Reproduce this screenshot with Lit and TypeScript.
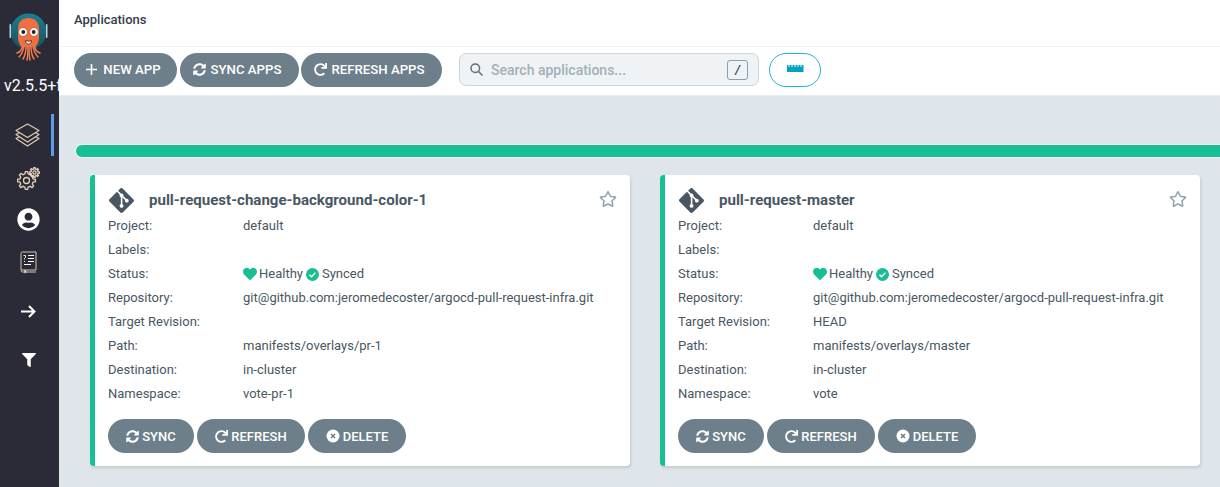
import { LitElement, html, css, svg } from "lit";
import { customElement } from "lit/decorators.js";

const SYNC = "M370.72 133.28C339.458 104.008 298.888 87.962 255.848 88c-77.458.068-144.328 53.178-162.791 126.85-1.344 5.363-6.122 9.15-11.651 9.15H24.103c-7.498 0-13.194-6.807-11.807-14.176C33.933 94.924 134.813 8 256 8c66.448 0 126.791 26.136 171.315 68.685L463.03 40.97C478.149 25.851 504 36.559 504 57.941V192c0 13.255-10.745 24-24 24H345.941c-21.382 0-32.09-25.851-16.971-40.971l41.75-41.749zM32 296h134.059c21.382 0 32.09 25.851 16.971 40.971l-41.75 41.75c31.262 29.273 71.835 45.319 114.876 45.28 77.418-.07 144.315-53.144 162.787-126.849 1.344-5.363 6.122-9.15 11.651-9.15h57.304c7.498 0 13.194 6.807 11.807 14.176C478.067 417.076 377.187 504 256 504c-66.448 0-126.791-26.136-171.315-68.685L48.97 471.03C33.851 486.149 8 475.441 8 454.059V320c0-13.255 10.745-24 24-24z";
const REDO = "M500.33 0h-47.41a12 12 0 0 0-12 12.57l4 82.76A247.42 247.42 0 0 0 256 8C119.34 8 7.9 119.53 8 256.19 8.1 393.07 119.1 504 256 504a247.1 247.1 0 0 0 166.18-63.91 12 12 0 0 0 .48-17.43l-34-34a12 12 0 0 0-16.38-.55A176 176 0 1 1 402.1 157.8l-101.53-4.87a12 12 0 0 0-12.57 12v47.41a12 12 0 0 0 12 12h200.33a12 12 0 0 0 12-12V12a12 12 0 0 0-12-12z";
const HEART = "M462.3 62.6C407.5 15.9 326 24.3 275.7 76.2L256 96.5l-19.7-20.3C186.1 24.3 104.5 15.9 49.7 62.6c-62.8 53.6-66.1 149.8-9.9 207.9l193.5 199.8c12.5 12.9 32.8 12.9 45.3 0l193.5-199.8c56.3-58.1 53-154.3-9.8-207.9z";
const USER = "M248 8C111 8 0 119 0 256s111 248 248 248 248-111 248-248S385 8 248 8zm0 96c48.6 0 88 39.4 88 88s-39.4 88-88 88-88-39.4-88-88 39.4-88 88-88zm0 344c-58.7 0-111.3-26.6-146.5-68.2 18.8-35.4 55.6-59.8 98.5-59.8 2.4 0 4.8.4 7.1 1.1 13 4.2 26.6 6.9 40.9 6.9 14.3 0 28-2.7 40.9-6.9 2.3-.7 4.7-1.1 7.1-1.1 42.9 0 79.7 24.4 98.5 59.8C359.3 421.4 306.7 448 248 448z";
const FILTER = "M487.976 0H24.028C2.71 0-8.047 25.866 7.058 40.971L192 225.941V432c0 7.831 3.821 15.17 10.237 19.662l80 55.98C298.02 518.69 320 507.493 320 487.98V225.941l184.947-184.97C520.021 25.896 509.338 0 487.976 0z";
const GIT = "M23.546 10.93L13.067.452c-.604-.603-1.582-.603-2.188 0L8.708 2.627l2.76 2.76c.645-.215 1.379-.07 1.889.441.516.515.658 1.258.438 1.9l2.658 2.66c.645-.223 1.387-.078 1.9.435.721.72.721 1.884 0 2.604-.719.719-1.881.719-2.6 0-.539-.541-.674-1.337-.404-1.996L12.86 8.955v6.525c.176.086.342.203.488.348.713.721.713 1.883 0 2.6-.719.721-1.889.721-2.609 0-.719-.719-.719-1.879 0-2.598.182-.18.387-.316.605-.406V8.835c-.217-.091-.424-.222-.6-.401-.545-.545-.676-1.342-.396-2.009L7.636 3.7.45 10.881c-.6.605-.6 1.584 0 2.189l10.48 10.477c.604.604 1.582.604 2.186 0l10.43-10.43c.605-.603.605-1.582 0-2.187";
const STAR = "M528.1 171.5L382 150.2 316.7 17.8c-11.7-23.6-45.6-23.9-57.4 0L194 150.2 47.9 171.5c-26.2 3.8-36.7 36.1-17.7 54.6l105.7 103-25 145.5c-4.5 26.3 23.2 46 46.4 33.7L288 439.6l130.7 68.7c23.2 12.2 50.9-7.4 46.4-33.7l-25-145.5 105.7-103c19-18.5 8.5-50.8-17.7-54.6zM388.6 312.3l23.7 138.4L288 385.4l-124.3 65.3 23.7-138.4-100.6-98 139-20.2 62.2-126 62.2 126 139 20.2-100.6 98z";

const icon = (d: string, vb: string, size: number, cls = "") =>
  html`<svg class=${cls} width=${size} height=${size} viewBox=${vb} fill="currentColor"><path d=${d}></path></svg>`;

const plusIcon = html`<svg width="13" height="13" viewBox="0 0 13 13" fill="none" stroke="currentColor" stroke-width="1.6"><path d="M6.5 1v11M1 6.5h11"></path></svg>`;
const xIcon = html`<svg width="14" height="14" viewBox="0 0 14 14"><circle cx="7" cy="7" r="6.5" fill="currentColor"></circle><path d="M5 5l4 4M9 5l-4 4" stroke="#6d7f8b" stroke-width="1.5"></path></svg>`;
const checkIcon = html`<svg width="13" height="13" viewBox="0 0 14 14"><circle cx="7" cy="7" r="7" fill="#18be94"></circle><path d="M3.8 7.2l2.2 2.2 4.2-4.4" fill="none" stroke="#fff" stroke-width="1.5"></path></svg>`;

const logo = html`<svg width="46" height="50" viewBox="0 0 46 50">
  <defs><linearGradient id="hel" x1="0" y1="0" x2="0" y2="1"><stop offset="0" stop-color="#1b7f8e"></stop><stop offset="1" stop-color="#1c4f5c"></stop></linearGradient></defs>
  <circle cx="22.500" cy="19.500" r="18" fill="url(#hel)"></circle>
  <path d="M5 12H4.500A1 1 0 0 0 3.500 13v12a1 1 0 0 0 1 1H5zM40 12h.500a1 1 0 0 1 1 1v12a1 1 0 0 1-1 1H40z" fill="#b4d6e6"></path>
  <g fill="none" stroke="#ee7a4d" stroke-width="1.500" stroke-linecap="round">
    <path d="M17 33c-1 5-3 7-6 8"></path>
    <path d="M18 34c-1 6-3 9-5 11"></path>
    <path d="M20 34c0 6-1 10-3 13"></path>
    <path d="M22 34c0 6 0 10-1 14"></path>
    <path d="M23 34c0 6 0 10 1 14"></path>
    <path d="M25 34c0 6 1 10 3 13"></path>
    <path d="M27 34c1 6 3 9 5 11"></path>
    <path d="M28 33c1 5 3 7 6 8"></path>
  </g>
  <path d="M12 16.500C12 10 16.500 6 22.500 6S33 10 33 16.500V26c0 4-2 7-3.500 9h-14C14 33 12 30 12 26z" fill="#ee6f43"></path>
  <circle cx="17" cy="20" r="4.300" fill="#fff" stroke="#a8452a" stroke-width=".5"></circle>
  <circle cx="28" cy="20" r="4.300" fill="#fff" stroke="#a8452a" stroke-width=".5"></circle>
  <circle cx="17.300" cy="20" r="1.900" fill="#2b1d1a"></circle>
  <circle cx="27.700" cy="20" r="1.900" fill="#2b1d1a"></circle>
  <path d="M19.500 28.500c2 1 4 1 6 0 0 2.500-1.500 3.500-3 3.500s-3-1-3-3.500z" fill="#fff" stroke="#3a1e14" stroke-width=".8"></path>
</svg>`;

const layers = html`<svg width="25" height="24" viewBox="0 0 25 24" fill="#2b2b38" stroke="#dfcdb6" stroke-width="1.200" stroke-linejoin="round">
  <path d="M1 15.500l11.500-6 11.500 6-11.500 7.500z"></path>
  <path d="M1 11.500l11.500-6 11.500 6-11.500 7.500z"></path>
  <path d="M1 7.500L12.500 1 24 7.500 12.500 14.500z"></path>
</svg>`;

const gearPath = (cx: number, cy: number, r: number, R: number, n: number) => {
  let d = "";
  const step = (Math.PI * 2) / n;
  for (let i = 0; i < n; i++) {
    const a = i * step;
    const pts: [number, number][] = [
      [a - step * 0.3, r],
      [a - step * 0.16, R],
      [a + step * 0.16, R],
      [a + step * 0.3, r],
    ];
    for (const [t, q] of pts) {
      d += `${d ? "L" : "M"}${(cx + Math.cos(t) * q).toFixed(2)} ${(cy + Math.sin(t) * q).toFixed(2)}`;
    }
  }
  return d + "Z";
};
const gear = (cx: number, cy: number, r: number, R: number, n: number, hole: number) =>
  svg`<path d=${gearPath(cx, cy, r, R, n)}></path><circle cx=${cx} cy=${cy} r=${hole}></circle>`;
const gears = html`<svg width="23" height="23" viewBox="0 0 23 23" fill="#2b2b38" stroke="#e6d3bb" stroke-width="1.300">
  ${gear(9.500, 13.500, 6.800, 9, 8, 3)}
  ${gear(17.500, 5.500, 3.600, 5, 8, 1.600)}
</svg>`;

const book = html`<svg width="17" height="23" viewBox="0 0 17 23" fill="none" stroke-width="1">
  <path d="M1 19V2.500A1.500 1.500 0 0 1 2.500 1H16v18z" stroke="#d5c6b3"></path>
  <path d="M1 19.500A1.500 1.500 0 0 0 2.500 21H16" stroke="#d5c6b3"></path>
  <path d="M3.500 4.500h2v2l-1 1v1M4.500 10v1" stroke="#fff" stroke-width=".9"></path>
  <path d="M8 4.500h6M8 7.500h6M8 10.500h6M4 13.500h7" stroke="#fff" stroke-width="1.100"></path>
  <path d="M4 19v3.500l1.200-1 1.200 1V19z" fill="#d5c6b3" stroke="none"></path>
</svg>`;

const arrow = html`<svg width="15" height="13" viewBox="0 0 15 13" fill="none" stroke="#fff" stroke-width="2"><path d="M0 6.500h13.500M8 1l5.500 5.500L8 12"></path></svg>`;

const search = html`<svg width="13" height="13" viewBox="0 0 13 13" fill="none" stroke="#5f6f7b" stroke-width="1.500"><circle cx="5.300" cy="5.300" r="4.300"></circle><path d="M8.500 8.500L12.500 12.500"></path></svg>`;

const ruler = html`<svg width="17" height="7" viewBox="0 0 17 7"><path d="M0 0h1.500v2h1V0h2v2h1V0h2v2h1V0h2v2h1V0h2v2h1V0h2v7H0z" fill="#00a2c2"></path></svg>`;

interface App { name: string; rev: string; path: string; ns: string; }
const APPS: App[] = [
  { name: "pull-request-change-background-color-1", rev: "", path: "manifests/overlays/pr-1", ns: "vote-pr-1" },
  { name: "pull-request-master", rev: "HEAD", path: "manifests/overlays/master", ns: "vote" },
];

@customElement("app-root")
export class AppRoot extends LitElement {
  static styles = css`
    :host { display: flex; width: 1220px; height: 487px; overflow: hidden; font-family: Roboto, "Liberation Sans", sans-serif; background: #dee6eb; color: #495763; }
    .side { width: 59px; flex: none; background: #2b2b38; color: #fff; overflow: hidden; display: flex; flex-direction: column; }
    .logo { height: 52px; padding: 12px 0 0 6px; flex: none; }
    .logo svg { display: block; }
    .ver { font-size: 16px; line-height: 20px; white-space: nowrap; padding-left: 4px; margin-top: 12px; color: #fff; }
    .nav { margin-top: 18px; display: flex; flex-direction: column; }
    .nav div { display: flex; align-items: center; justify-content: center; width: 57px; box-sizing: border-box; color: #fff; }
    .nav .act { width: 54px; border-right: 3px solid #5b9cee; height: 42px; margin-bottom: 1px; padding-left: 3px; }
    .h42 { height: 42px; }
    .h40 { height: 40px; }
    .h46 { height: 46px; }
    .h52 { height: 52px; }
    .main { flex: 1; min-width: 0; display: flex; flex-direction: column; }
    .top { height: 47px; flex: none; box-sizing: border-box; background: #fff; border-bottom: 1px solid #eff3f5; display: flex; align-items: center; padding: 0 15px 8px; font-size: 13px; font-weight: 500; color: #363c4a; }
    .tools { height: 49px; flex: none; background: #fff; border-bottom: 1px solid #e9eef1; box-sizing: border-box; display: flex; align-items: center; padding: 0 0 3px 15px; }
    .btn { display: inline-flex; align-items: center; justify-content: center; gap: 4px; height: 34px; border-radius: 17px; background: #6d7f8b; color: #fff; font-size: 13px; font-weight: 500; box-sizing: border-box; white-space: nowrap; }
    .btn svg { flex: none; }
    .tools .btn { font-size: 13.2px; padding-right: 5px; gap: 5px; }
    .tools .btn + .btn { margin-left: 2px; }
    .new { width: 103px; margin-right: 1px; }
    .sync { width: 119px; }
    .refresh { width: 141px; }
    .search { width: 300px; height: 33px; margin-left: 17px; box-sizing: border-box; background: #eff3f5; border: 1px solid #ccd6dd; border-radius: 7px; display: flex; align-items: center; padding: 0 10px; gap: 8px; color: #a4b0b9; font-size: 14px; font-weight: 500; }
    .search span { flex: 1; }
    .search kbd { width: 21px; height: 20px; box-sizing: border-box; border: 1px solid #8ba0ae; border-radius: 3px; display: flex; align-items: center; justify-content: center; font: italic 700 13px Roboto, sans-serif; color: #495763; }
    .rbtn { width: 52px; height: 34px; margin-left: 10px; box-sizing: border-box; border: 1px solid #1fb6cf; border-radius: 17px; display: flex; align-items: center; justify-content: center; padding-bottom: 2px; background: #fff; }
    .content { flex: 1; padding: 48px 0 0 16px; min-width: 0; }
    .bar { height: 14px; width: 1300px; box-sizing: border-box; background: #18be94; border: 1px solid #fff; border-radius: 7px; }
    .grid { display: grid; grid-template-columns: 540px 540px; gap: 30px; margin: 17px 0 0 15px; }
    .card { height: 291px; box-sizing: border-box; background: #fff; border-left: 5px solid #18be94; border-radius: 4px; box-shadow: 1px 2px 3px rgba(0,0,0,.12); padding: 13px 13px 0 13px; position: relative; font-size: 13px; }
    .title { display: flex; align-items: center; height: 24px; font-size: 15.05px; font-weight: 700; color: #495763; }
    .title svg { margin-right: 15px; margin-left: 1px; color: #495763; }
    .star { position: absolute; top: 15px; right: 13px; color: #8fa4b1; }
    .rows { margin-top: 2px; }
    .row { display: grid; grid-template-columns: 135px 1fr; height: 24px; line-height: 24px; color: #495763; }
    .status { display: flex; align-items: center; gap: 3px; }
    .status .heart { color: #18be94; margin-right: -1px; }
    .acts { display: flex; gap: 3px; margin-top: 13px; }
    .acts .btn { gap: 3px; }
    .a1 { width: 86px; }
    .a2 { width: 108px; }
    .a3 { width: 98px; }
  `;

  private row(k: string, v: unknown) {
    return html`<div class="row"><span>${k}</span><span>${v}</span></div>`;
  }

  private card(a: App) {
    return html`<div class="card">
      <div class="title">${icon(GIT, "0 0 24 24", 25)}<span>${a.name}</span></div>
      ${icon(STAR, "0 0 576 512", 18, "star")}
      <div class="rows">
        ${this.row("Project:", "default")}
        ${this.row("Labels:", "")}
        <div class="row"><span>Status:</span><span class="status">${icon(HEART, "0 0 512 512", 14, "heart")}<span>Healthy</span>${checkIcon}<span>Synced</span></span></div>
        ${this.row("Repository:", "git@github.com:jeromedecoster/argocd-pull-request-infra.git")}
        ${this.row("Target Revision:", a.rev)}
        ${this.row("Path:", a.path)}
        ${this.row("Destination:", "in-cluster")}
        ${this.row("Namespace:", a.ns)}
      </div>
      <div class="acts">
        <div class="btn a1">${icon(SYNC, "0 0 512 512", 13)}SYNC</div>
        <div class="btn a2">${icon(REDO, "0 0 512 512", 13)}REFRESH</div>
        <div class="btn a3">${xIcon}DELETE</div>
      </div>
    </div>`;
  }

  render() {
    return html`
      <aside class="side">
        <div class="logo">${logo}</div>
        <div class="ver">v2.5.5+f</div>
        <nav class="nav">
          <div class="act">${layers}</div>
          <div class="h42">${gears}</div>
          <div class="h40">${icon(USER, "0 0 496 512", 23)}</div>
          <div class="h46">${book}</div>
          <div class="h52">${arrow}</div>
          <div class="h46">${icon(FILTER, "0 0 512 512", 14)}</div>
        </nav>
      </aside>
      <div class="main">
        <header class="top">Applications</header>
        <div class="tools">
          <div class="btn new">${plusIcon}NEW APP</div>
          <div class="btn sync">${icon(SYNC, "0 0 512 512", 13)}SYNC APPS</div>
          <div class="btn refresh">${icon(REDO, "0 0 512 512", 13)}REFRESH APPS</div>
          <div class="search">${search}<span>Search applications...</span><kbd>/</kbd></div>
          <div class="rbtn">${ruler}</div>
        </div>
        <div class="content">
          <div class="bar"></div>
          <div class="grid">${APPS.map((a) => this.card(a))}</div>
        </div>
      </div>
    `;
  }
}
